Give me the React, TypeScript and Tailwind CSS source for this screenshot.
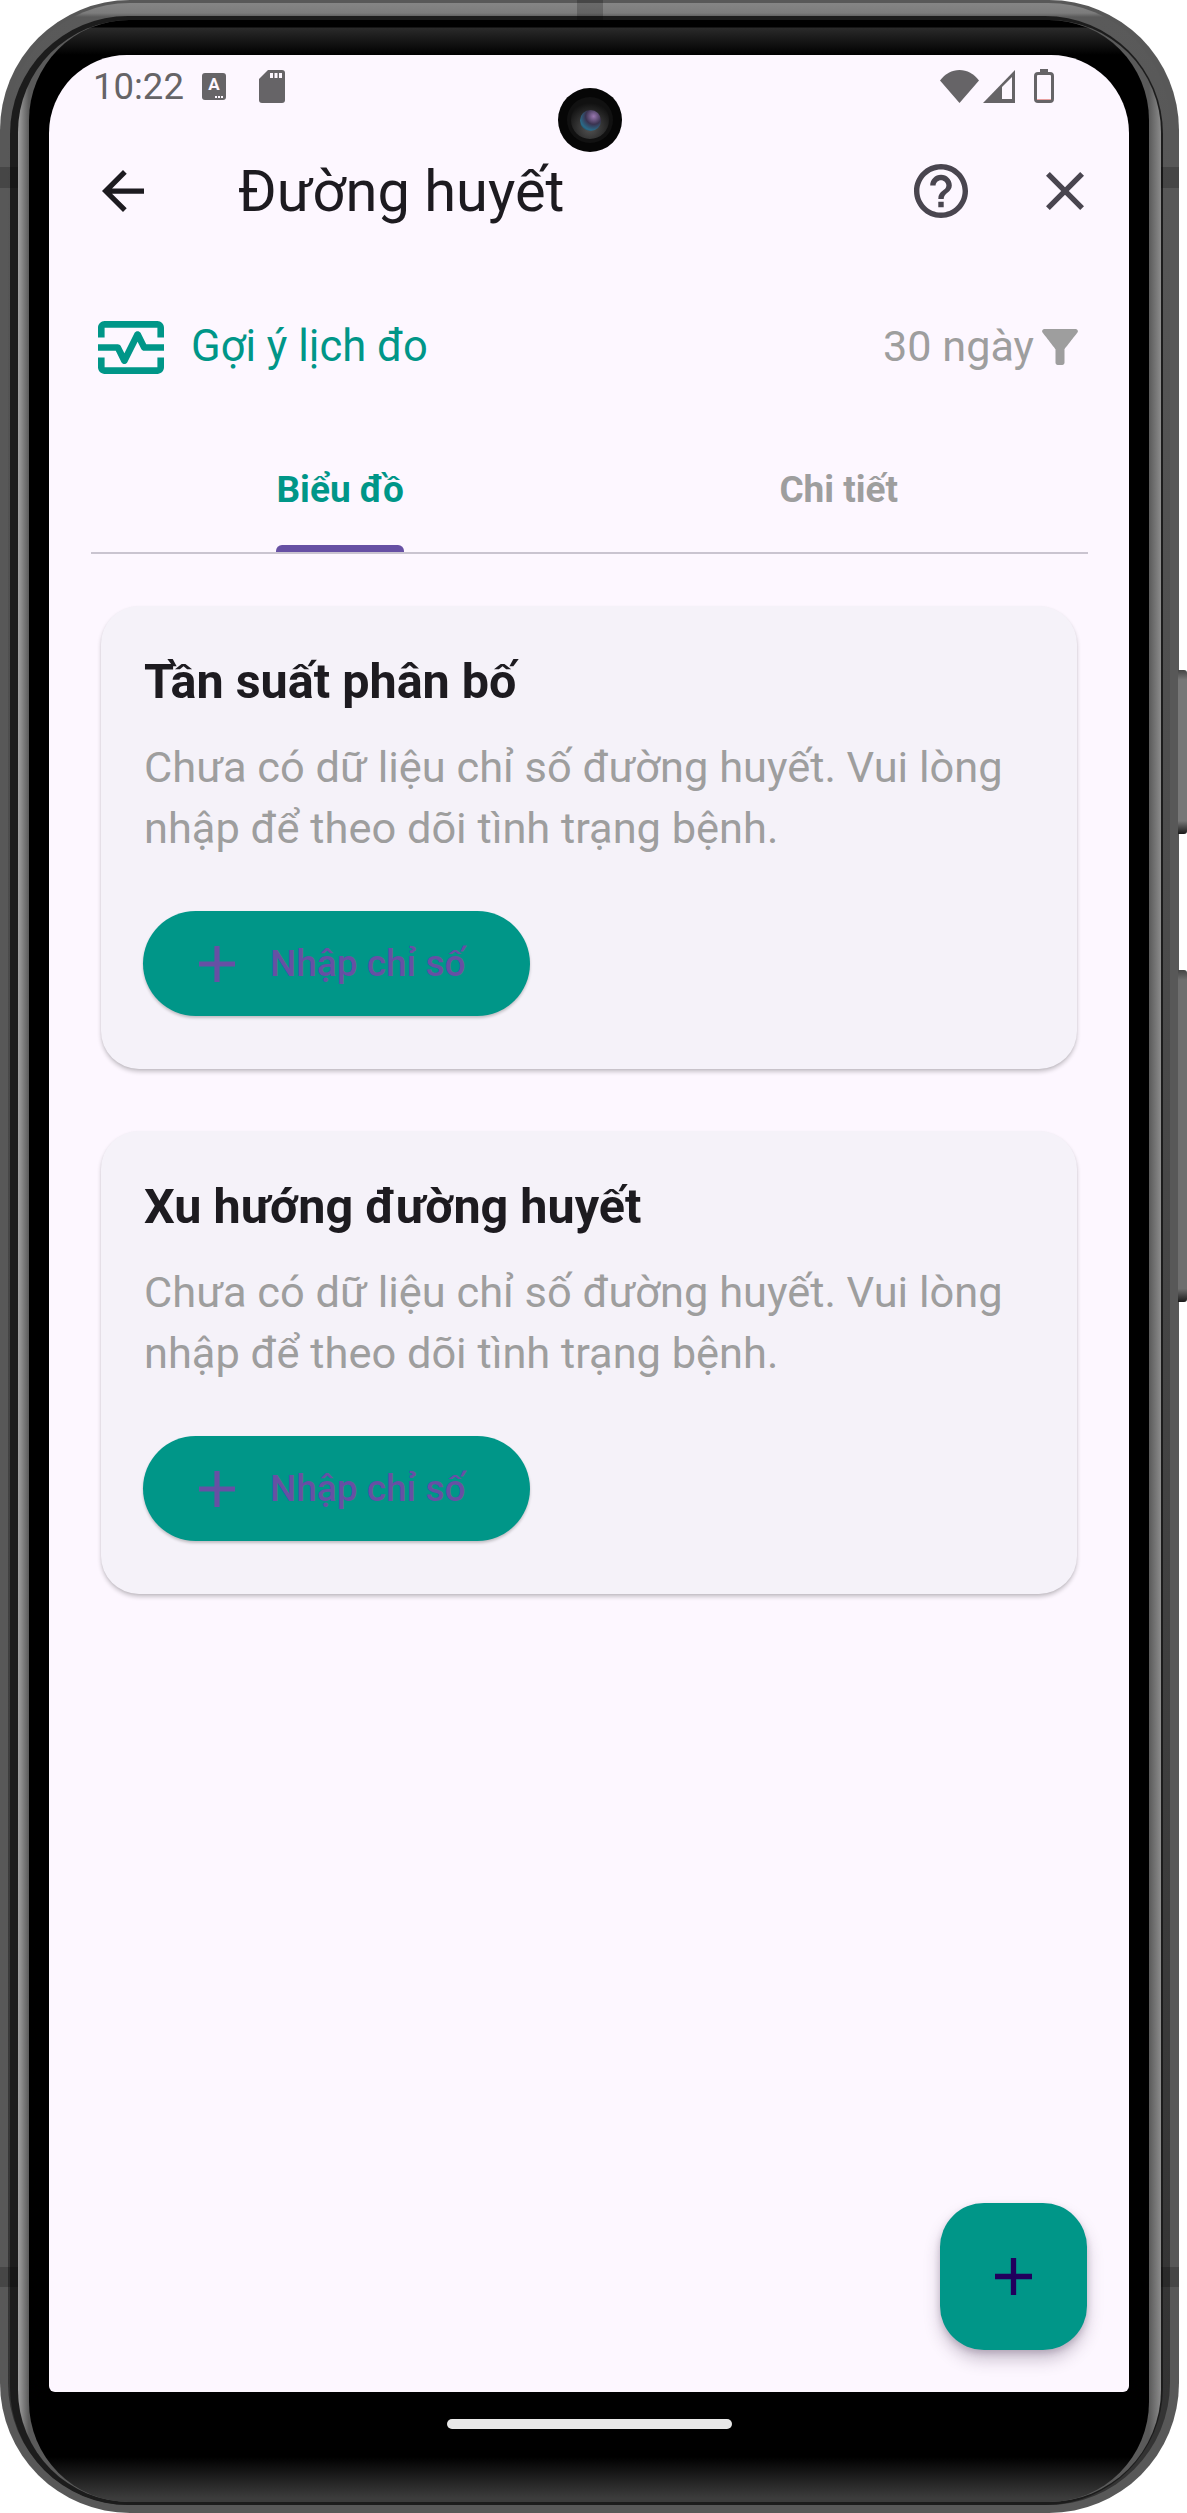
import React from "react";

const font = { fontFamily: "Roboto, sans-serif" };

function Mi({ d, box, className }: { d: string; box: string; className: string }) {
  return (
    <svg viewBox={box} className={className} fill="currentColor">
      <path d={d} />
    </svg>
  );
}

const PLUS = "M19 13h-6v6h-2v-6H5v-2h6V5h2v6h6v2z";

function Card({ title }: { title: string }) {
  return (
    <div className="h-[463px] rounded-[38px] bg-[#f5f2f9] pl-[43px] pr-[30px] pt-[50px] shadow-[0_3px_4px_rgba(0,0,0,0.2),0_1px_2px_rgba(0,0,0,0.06)]">
      <div className="h-[52px] text-[48.500px] leading-[52px] font-bold text-[#1d1b20] whitespace-nowrap">{title}</div>
      <div className="mt-[29px] text-[43.400px] leading-[61px] text-[#9e9e9e]">
        <div className="whitespace-nowrap">Chưa có dữ liệu chỉ số đường huyết. Vui lòng</div>
        <div className="whitespace-nowrap">nhập để theo dõi tình trạng bệnh.</div>
      </div>
      <div className="mt-[52px] -ml-[1px] flex h-[105px] w-[387px] items-center rounded-full bg-[#009688] pl-[56px] shadow-[0_2px_3px_rgba(0,0,0,0.22)]">
        <Mi d={PLUS} box="5 5 14 14" className="h-[36px] w-[36px] text-[#6750a4]" />
        <span className="ml-[35px] text-[37px] font-medium leading-[44px] text-[#6750a4] whitespace-nowrap">Nhập chỉ số</span>
      </div>
    </div>
  );
}

export default function App() {
  return (
    <div className="relative h-[2513px] w-[1187px] overflow-hidden bg-white" style={font}>
      {/* side buttons */}
      <div className="absolute left-[1178px] top-[670px] h-[164px] w-[9px] rounded-r-[3px] bg-[linear-gradient(to_bottom,#444_0%,#777_6%,#777_92%,#1a1a1a_100%)]" />
      <div className="absolute left-[1178px] top-[970px] h-[332px] w-[9px] rounded-r-[3px] bg-[linear-gradient(to_bottom,#444_0%,#6e6e6e_3%,#6e6e6e_96%,#1a1a1a_100%)]" />

      {/* device frame */}
      <div className="h-full w-[1179px] rounded-[130px] bg-[#585858] pb-[8px] pl-[8px] pr-[9px] pt-[3px]">
        <div className="h-full rounded-[122px] bg-[linear-gradient(to_bottom,#858585_0px,#7c7c7c_10px,#5a5a5a_14px,#333_2400px)] pl-[2px] pr-[7px] pt-[13px]">
          <div className="h-full rounded-[118px] bg-[#1c1c1c] pb-[3px] pl-[8px] pr-[2px] pt-[4px]">
            <div className="h-full rounded-[112px] bg-[linear-gradient(to_right,#a0a0a0_0px,#5a5a5a_11px,#5a5a5a_1131px,#8c8c8c_1143px)] pl-[11px] pr-[12px]">
              <div className="h-full rounded-[100px] bg-[linear-gradient(to_bottom,#000_0px,#000_7px,#2a2a2a_8px,#000_35px,#000_2437px,#3c3c3c_2478px,#3c3c3c_2480px)] pb-[110px] pl-[20px] pr-[20px] pt-[35px]">
                {/* screen */}
                <div className="relative flex h-full flex-col rounded-b-[6px] rounded-t-[78px] bg-[#fdf7ff]">
                  {/* status bar */}
                  <div className="mt-[14px] flex h-[34px] items-center pl-[44px] pr-[75px] text-[#666467]">
                    <span className="pt-[1px] text-[36.500px] leading-[34px]">10:22</span>
                    <div className="relative ml-[18px] flex h-[27px] w-[24px] items-start justify-center rounded-[3px] bg-[#666467]">
                      <span className="text-[17px] font-bold leading-[22px] text-[#fdf7ff]">A</span>
                      <span className="absolute bottom-[2px] right-[3px] h-[2px] w-[8px] bg-[repeating-linear-gradient(to_right,#fdf7ff_0px,#fdf7ff_2px,transparent_2px,transparent_3px)]" />
                    </div>
                    <svg viewBox="0 0 26 33" className="ml-[33px] h-[33px] w-[26px]">
                      <path d="M9 0H23a3 3 0 0 1 3 3V30a3 3 0 0 1-3 3H3a3 3 0 0 1-3-3V9Z" fill="#666467" />
                      <path d="M11 3h3v5h-3zM15.500 3h3v5h-3zM20 3h3v5h-3z" fill="#fdf7ff" />
                    </svg>
                    <div className="flex-1" />
                    <svg viewBox="0 0 39 33" className="h-[33px] w-[39px]">
                      <path d="M19.500 33 0 10.500C5 4 12 0 19.500 0S34 4 39 10.500Z" fill="#666467" />
                    </svg>
                    <svg viewBox="0 0 32 33" className="ml-[4px] h-[33px] w-[32px]">
                      <path d="M32 0V33H0Z" fill="#666467" />
                      <path d="M19 29V17L29 7V29Z" fill="#fdf7ff" />
                    </svg>
                    <svg viewBox="0 0 20 34" className="ml-[19px] h-[34px] w-[20px]">
                      <path d="M6 0h8v4h-8z" fill="#666467" />
                      <rect x="1.500" y="4.500" width="17" height="28" rx="2.500" fill="#fdf7ff" stroke="#666467" strokeWidth="3" />
                      <path d="M3 30h14v1H3z" fill="#e8a0a0" />
                    </svg>
                  </div>

                  {/* app bar */}
                  <div className="mt-[55px] flex h-[66px] items-center pl-[53px] pr-[45px]">
                    <Mi
                      d="M20 11H7.830l5.590-5.590L12 4l-8 8 8 8 1.410-1.410L7.830 13H20v-2z"
                      box="4 4 16 16"
                      className="h-[42px] w-[42px] text-[#1d1b20]"
                    />
                    <div className="ml-[94px] flex-1 text-[57.800px] leading-[66px] text-[#1d1b20] whitespace-nowrap">Đường huyết</div>
                    <Mi
                      d="M11 18h2v-2h-2v2zm1-16C6.480 2 2 6.480 2 12s4.480 10 10 10 10-4.480 10-10S17.520 2 12 2zm0 18c-4.410 0-8-3.590-8-8s3.590-8 8-8 8 3.590 8 8-3.590 8-8 8zm0-14c-2.210 0-4 1.790-4 4h2c0-1.100.9-2 2-2s2 .9 2 2c0 2-3 1.750-3 5h2c0-2.250 3-2.500 3-5 0-2.210-1.790-4-4-4z"
                      box="2 2 20 20"
                      className="h-[54px] w-[54px] text-[#49454f]"
                    />
                    <Mi
                      d="M19 6.410 17.590 5 12 10.590 6.410 5 5 6.410 10.590 12 5 17.590 6.410 19 12 13.410 17.590 19 19 17.590 13.410 12z"
                      box="5 5 14 14"
                      className="ml-[78px] h-[38px] w-[38px] text-[#49454f]"
                    />
                  </div>

                  {/* suggestion row */}
                  <div className="mt-[96px] flex h-[54px] items-center pl-[49px] pr-[51px]">
                    <svg viewBox="2 4 20 16" className="h-[53px] w-[66px] text-[#009688]" fill="currentColor">
                      <path d="M20 4H4c-1.100 0-2 .9-2 2v3h2V6h16v3h2V6c0-1.100-.9-2-2-2z" />
                      <path d="M20 18H4v-3H2v3c0 1.100.9 2 2 2h16c1.100 0 2-.9 2-2v-3h-2v3z" />
                      <path d="M14.890 7.550c-.34-.68-1.450-.68-1.790 0L10 13.760l-1.110-2.210C8.720 11.210 8.370 11 8 11H2v2h5.380l1.720 3.450c.18.34.52.55.9.55s.72-.21.89-.55L14 10.240l1.110 2.210c.17.34.52.55.89.55h6v-2h-5.380l-1.730-3.450z" />
                    </svg>
                    <span className="ml-[27px] flex-1 text-[43.500px] leading-[54px] text-[#009688]">Gợi ý lịch đo</span>
                    <span className="text-[43.200px] leading-[54px] text-[#9e9e9e]">30 ngày</span>
                    <Mi
                      d="M4.250 5.610C6.270 8.200 10 13 10 13v6c0 .55.45 1 1 1h2c.55 0 1-.45 1-1v-6s3.720-4.800 5.740-7.390c.51-.66.04-1.610-.79-1.610H5.040c-.83 0-1.300.95-.79 1.610z"
                      box="4 4 16 16"
                      className="ml-[8px] h-[36px] w-[36px] text-[#9e9e9e]"
                    />
                  </div>

                  {/* tabs */}
                  <div className="ml-[42px] mr-[41px] mt-[93px] flex h-[87px] border-b-2 border-[#cac4d0]">
                    <div className="flex flex-1 flex-col items-center">
                      <span className="h-[79px] pt-[1px] text-[37px] font-bold leading-[44px] text-[#009688]">Biểu đồ</span>
                      <span className="h-[7px] w-[128px] rounded-t-[6px] bg-[#6750a4]" />
                    </div>
                    <div className="flex flex-1 flex-col items-center">
                      <span className="pt-[1px] text-[37px] font-bold leading-[44px] text-[#9e9e9e]">Chi tiết</span>
                    </div>
                  </div>

                  {/* cards */}
                  <div className="mx-[52px] mt-[52px] flex flex-col gap-[62px]">
                    <Card title="Tần suất phân bố" />
                    <Card title="Xu hướng đường huyết" />
                  </div>

                  {/* FAB */}
                  <div className="absolute bottom-[42px] right-[42px] flex h-[147px] w-[147px] items-center justify-center rounded-[44px] bg-[#009688] shadow-[0_10px_16px_rgba(60,40,70,0.25),0_3px_6px_rgba(60,40,70,0.2)]">
                    <Mi d={PLUS} box="5 5 14 14" className="h-[37px] w-[37px] text-[#21005d]" />
                  </div>

                  {/* camera */}
                  <div className="absolute left-[509px] top-[33px] flex h-[64px] w-[64px] items-center justify-center rounded-full bg-[#060606]">
                    <div className="flex h-[46px] w-[46px] items-center justify-center rounded-full bg-[#111]">
                      <div className="flex h-[38px] w-[38px] items-center justify-center rounded-full bg-[radial-gradient(circle_at_50%_70%,#555,#111_75%)]">
                        <div className="h-[21px] w-[21px] rounded-full bg-[radial-gradient(circle_at_65%_30%,#9a78b0_0%,#3a3350_40%,#2a6a88_70%,#123_100%)]" />
                      </div>
                    </div>
                  </div>

                  {/* home indicator */}
                  <div className="absolute bottom-[-37px] left-[398px] h-[10px] w-[285px] rounded-full bg-[#e8e8e8]" />
                </div>
              </div>
            </div>
          </div>
        </div>
      </div>

      {/* frame seams */}
      <div className="absolute left-0 top-[167px] h-[21px] w-[18px] bg-[#000]/20" />
      <div className="absolute left-0 top-[2267px] h-[20px] w-[18px] bg-[#000]/20" />
      <div className="absolute left-[1161px] top-[167px] h-[21px] w-[18px] bg-[#000]/20" />
      <div className="absolute left-[1161px] top-[2267px] h-[20px] w-[18px] bg-[#000]/20" />
      <div className="absolute left-[577px] top-0 h-[20px] w-[26px] bg-[#000]/20" />
    </div>
  );
}
